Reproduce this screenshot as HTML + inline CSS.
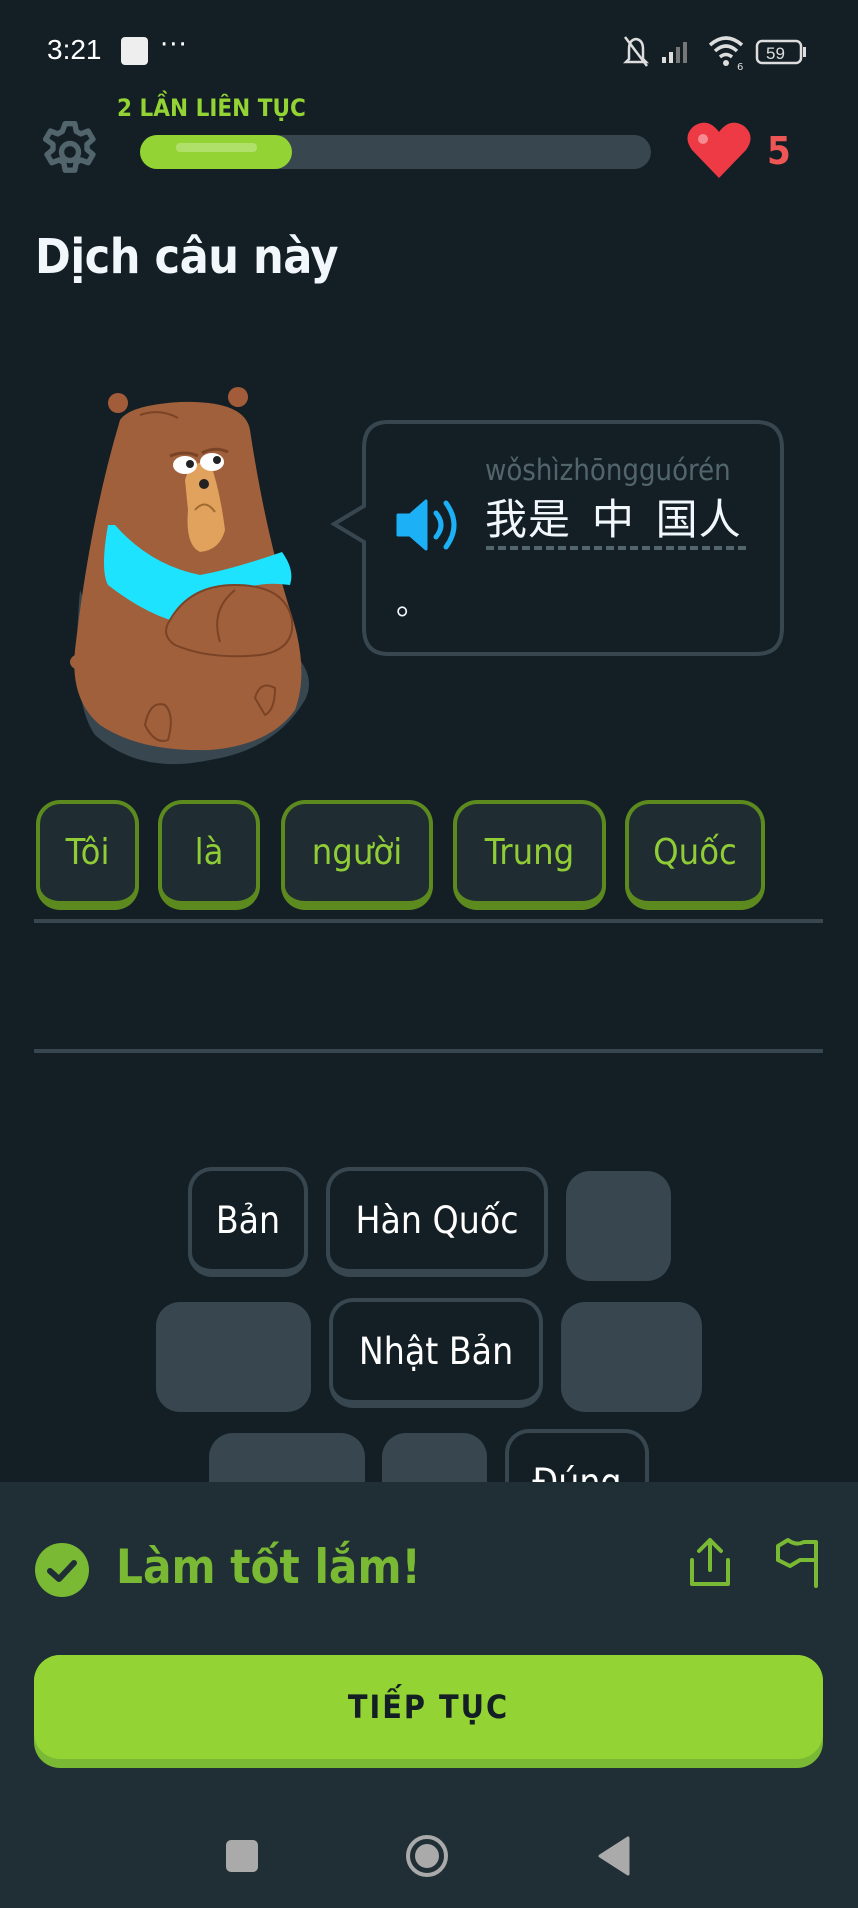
<!DOCTYPE html>
<html><head><meta charset="utf-8"><style>
*{margin:0;padding:0;box-sizing:border-box}
body{width:858px;height:1908px;background:#131f24;font-family:"DejaVu Sans","Liberation Sans","Noto Sans CJK SC",sans-serif;position:relative;overflow:hidden;color:#fff}
.a{position:absolute}
.chip{position:absolute;height:110px;border:4px solid #5c8a1f;border-bottom-width:9px;border-radius:24px;background:#1f2d33;color:#8fcc35;font-size:36px;display:flex;align-items:center;justify-content:center;font-family:"DejaVu Sans Condensed","DejaVu Sans",sans-serif}
.w{position:absolute;height:110px;border:4px solid #37464f;border-bottom-width:8px;border-radius:24px;background:#131f24;color:#fff;font-size:37px;display:flex;align-items:center;justify-content:center;font-family:"DejaVu Sans Condensed","DejaVu Sans",sans-serif}
.g{position:absolute;height:110px;border-radius:24px;background:#37464f}
</style></head><body>
<!-- status bar -->
<div class="a" style="left:47px;top:34px;font-size:28px;font-family:'Liberation Sans',sans-serif">3:21</div>
<div class="a" style="left:121px;top:37px;width:27px;height:28px;background:#eee;border-radius:4px"></div>
<div class="a" style="left:160px;top:30px;font-size:26px;letter-spacing:1px">···</div>
<svg class="a" style="left:620px;top:33px" width="200" height="40" viewBox="0 0 200 40">
<path d="M9 26 L9 16 Q9 7 16 6 Q23 7 23 16 L23 26 L26 29 L6 29 Z" fill="none" stroke="#ddd" stroke-width="2.5"/><line x1="5" y1="4" x2="27" y2="33" stroke="#ddd" stroke-width="2.5"/>
<rect x="42" y="24" width="4" height="6" fill="#ddd"/><rect x="49" y="19" width="4" height="11" fill="#ddd"/><rect x="56" y="14" width="4" height="16" fill="#777"/><rect x="63" y="9" width="4" height="21" fill="#777"/>
<path d="M90 12 Q106 -2 122 12" fill="none" stroke="#ddd" stroke-width="3.5"/><path d="M95 18 Q106 8 117 18" fill="none" stroke="#ddd" stroke-width="3.5"/><path d="M100 24 Q106 19 112 24" fill="none" stroke="#ddd" stroke-width="3.5"/><circle cx="106" cy="30" r="3" fill="#ddd"/>
<text x="117" y="37" font-size="10" fill="#ddd">6</text>
<rect x="137" y="8" width="44" height="22" rx="5" fill="none" stroke="#ddd" stroke-width="2.5"/><rect x="183" y="14" width="3" height="10" fill="#ddd"/>
<text x="146" y="26" font-size="17" fill="#ddd" font-family="Liberation Sans">59</text>
</svg>
<!-- header -->
<div class="a" style="left:117px;top:94px;font-size:24px;font-weight:bold;color:#93d333;font-family:'DejaVu Sans Condensed',sans-serif">2 LẦN LIÊN TỤC</div>
<svg class="a" style="left:36px;top:118px" width="68" height="68" viewBox="0 0 24 24"><path fill="none" stroke="#52656d" stroke-width="1.9" stroke-linejoin="round" d="M10.3 2h3.4l.5 2.7 1.6.9 2.6-1 1.7 2.9-2.1 1.8v1.8l2.1 1.8-1.7 2.9-2.6-1-1.6.9-.5 2.7h-3.4l-.5-2.7-1.6-.9-2.6 1-1.700-2.9 2.1-1.8V9.3L3.4 7.5l1.7-2.9 2.6 1 1.6-.9z"/><circle cx="12" cy="12" r="3" fill="none" stroke="#52656d" stroke-width="1.9"/></svg>
<div class="a" style="left:140px;top:135px;width:511px;height:34px;border-radius:17px;background:#37464f"></div>
<div class="a" style="left:140px;top:135px;width:152px;height:34px;border-radius:17px;background:#93d333"></div>
<div class="a" style="left:176px;top:143px;width:81px;height:9px;border-radius:4px;background:#b0e06a"></div>
<svg class="a" style="left:686px;top:120px" width="66" height="60" viewBox="0 0 66 60"><path d="M33 58 L6 30 Q-4 16 8 6 Q22 -3 33 12 Q44 -3 58 6 Q70 16 60 30 Z" fill="#ee3a45"/><circle cx="17" cy="19" r="5" fill="#f58b90"/></svg>
<div class="a" style="left:767px;top:129px;font-size:38px;font-weight:bold;color:#ee5555;font-family:'DejaVu Sans Condensed',sans-serif">5</div>
<div class="a" style="left:35px;top:229px;font-size:48px;font-weight:bold;font-family:'DejaVu Sans Condensed',sans-serif;color:#f1f7fb;letter-spacing:-0.5px">Dịch câu này</div>
<!-- bear -->
<svg class="a" style="left:60px;top:380px" width="260" height="395" viewBox="0 0 260 395">
<path d="M20 210 Q10 320 35 355 Q80 395 150 380 Q215 370 245 320 Q255 300 240 280 L40 260 Z" fill="#37464f"/>
<circle cx="58" cy="23" r="10" fill="#a35c3a"/><circle cx="178" cy="17" r="10" fill="#a35c3a"/>
<path d="M60 40 Q70 25 120 22 Q185 20 190 50 Q205 150 230 230 Q250 290 235 330 Q210 365 150 370 Q80 372 40 345 Q10 320 15 270 Q30 140 60 40 Z" fill="#a0603c"/>
<path d="M80 35 Q100 28 118 38" fill="none" stroke="#7a4326" stroke-width="2"/>
<path d="M125 100 Q130 80 150 82 Q160 110 165 150 Q160 170 140 172 Q125 165 128 130 Z" fill="#e0a25c"/>
<ellipse cx="125" cy="85" rx="12" ry="9" fill="#fff"/><ellipse cx="152" cy="82" rx="12" ry="9" fill="#fff"/>
<circle cx="130" cy="84" r="4" fill="#222"/><circle cx="157" cy="80" r="4" fill="#222"/>
<path d="M110 76 Q125 70 138 76 M142 73 Q155 66 168 72" stroke="#7a4326" stroke-width="3" fill="none"/>
<circle cx="144" cy="104" r="5" fill="#222"/>
<path d="M135 130 Q145 118 155 132" stroke="#a06a30" stroke-width="2" fill="none"/>
<path d="M48 145 Q40 190 48 205 Q80 230 110 240 L170 215 Q195 200 230 205 Q235 190 222 172 Q170 190 140 195 Q90 185 55 145 Z" fill="#1ee3ff"/>
<path d="M110 240 Q130 205 175 205 Q225 205 232 240 Q235 270 200 275 Q150 280 115 265 Q100 255 110 240 Z" fill="#a0603c" stroke="#7a4326" stroke-width="2"/>
<path d="M175 210 Q150 230 160 262" stroke="#7a4326" stroke-width="2" fill="none"/>
<path d="M85 345 Q90 320 105 325 Q115 335 108 360 Q95 365 85 345 Z" fill="#a0603c" stroke="#7a4326" stroke-width="2"/>
<path d="M195 318 Q200 300 215 308 Q215 330 205 335 Z" fill="#a0603c" stroke="#7a4326" stroke-width="2"/>
<ellipse cx="20" cy="282" rx="10" ry="8" fill="#a0603c"/>
</svg>
<!-- bubble -->
<svg class="a" style="left:330px;top:418px" width="460" height="244" viewBox="0 0 460 244">
<path d="M58 4 H426 Q452 4 452 30 V210 Q452 236 426 236 H58 Q34 236 34 210 V124 L4 106 L34 88 V30 Q34 4 58 4 Z" fill="#131f24" stroke="#37464f" stroke-width="4"/>
</svg>
<div class="a" style="left:485px;top:453px;font-size:29px;color:#52656d;font-family:'DejaVu Sans Condensed',sans-serif">wǒshìzhōngguórén</div>
<svg class="a" style="left:396px;top:497px" width="70" height="56" viewBox="0 0 70 56"><path d="M2 18 H14 L30 4 V52 L14 38 H2 Z" fill="#1cb0f6" stroke="#1cb0f6" stroke-width="3" stroke-linejoin="round"/><path d="M40 16 Q50 28 40 40" fill="none" stroke="#1cb0f6" stroke-width="5" stroke-linecap="round"/><path d="M50 6 Q66 28 50 50" fill="none" stroke="#1cb0f6" stroke-width="5" stroke-linecap="round"/></svg>
<div class="a" style="left:485px;top:492px;font-size:42px;color:#f1f7fb;font-family:'Noto Sans CJK SC',sans-serif;white-space:pre;line-height:50px;letter-spacing:1px">我是  中  国人</div>
<div class="a" style="left:486px;top:546px;width:260px;height:0;border-top:4px dashed #52656d"></div>
<div class="a" style="left:396px;top:578px;font-size:32px;color:#f1f7fb;font-family:'Noto Sans CJK SC',sans-serif">。</div>
<!-- answer chips -->
<div class="chip" style="left:36px;top:800px;width:103px">Tôi</div>
<div class="chip" style="left:158px;top:800px;width:102px">là</div>
<div class="chip" style="left:281px;top:800px;width:152px">người</div>
<div class="chip" style="left:453px;top:800px;width:153px">Trung</div>
<div class="chip" style="left:625px;top:800px;width:140px">Quốc</div>
<div class="a" style="left:34px;top:919px;width:789px;height:4px;background:#37464f"></div>
<div class="a" style="left:34px;top:1049px;width:789px;height:4px;background:#37464f"></div>
<!-- word bank -->
<div class="w" style="left:188px;top:1167px;width:120px">Bản</div>
<div class="w" style="left:326px;top:1167px;width:222px">Hàn Quốc</div>
<div class="g" style="left:566px;top:1171px;width:105px"></div>
<div class="g" style="left:156px;top:1302px;width:155px"></div>
<div class="w" style="left:329px;top:1298px;width:214px">Nhật Bản</div>
<div class="g" style="left:561px;top:1302px;width:141px"></div>
<div class="g" style="left:209px;top:1433px;width:156px"></div>
<div class="g" style="left:382px;top:1433px;width:105px"></div>
<div class="w" style="left:505px;top:1429px;width:144px;align-items:flex-start;padding-top:28px">Đúng</div>
<!-- bottom panel -->
<div class="a" style="left:0;top:1482px;width:858px;height:426px;background:#202f36"></div>
<svg class="a" style="left:34px;top:1542px" width="56" height="56" viewBox="0 0 56 56"><circle cx="28" cy="28" r="27" fill="#79b933"/><path d="M16 29 L25 37 L40 21" fill="none" stroke="#202f36" stroke-width="6" stroke-linecap="round" stroke-linejoin="round"/></svg>
<div class="a" style="left:116px;top:1540px;font-size:47px;font-weight:bold;color:#79b933;font-family:'DejaVu Sans Condensed',sans-serif">Làm tốt lắm!</div>
<svg class="a" style="left:688px;top:1536px" width="44" height="52" viewBox="0 0 44 52"><path d="M4 24 V48 H40 V24" fill="none" stroke="#79b933" stroke-width="4" stroke-linecap="round" stroke-linejoin="round"/><path d="M22 34 V4 M11 15 L22 4 L33 15" fill="none" stroke="#79b933" stroke-width="4" stroke-linecap="round" stroke-linejoin="round"/></svg>
<svg class="a" style="left:774px;top:1536px" width="46" height="52" viewBox="0 0 46 52"><path d="M4 24 V10 L14 4 Q22 10 30 6 L42 6 V50 M42 6 V24 H26 L16 30 L4 24" fill="none" stroke="#79b933" stroke-width="4" stroke-linecap="round" stroke-linejoin="round"/></svg>
<div class="a" style="left:34px;top:1655px;width:789px;height:113px;border-radius:26px;background:#79b933"></div>
<div class="a" style="left:34px;top:1655px;width:789px;height:104px;border-radius:26px;background:#93d333;display:flex;align-items:center;justify-content:center;font-size:32px;font-weight:bold;color:#131f24;letter-spacing:2px;font-family:'DejaVu Sans Condensed',sans-serif">TIẾP TỤC</div>
<!-- nav -->
<div class="a" style="left:226px;top:1840px;width:32px;height:32px;border-radius:5px;background:#aaa"></div>
<div class="a" style="left:406px;top:1835px;width:42px;height:42px;border-radius:50%;border:4px solid #aaa"></div>
<div class="a" style="left:415px;top:1844px;width:24px;height:24px;border-radius:50%;background:#aaa"></div>
<svg class="a" style="left:598px;top:1836px" width="32" height="40"><path d="M30 2 V38 L2 20 Z" fill="#aaa" stroke="#aaa" stroke-linejoin="round" stroke-width="3"/></svg>
</body></html>
